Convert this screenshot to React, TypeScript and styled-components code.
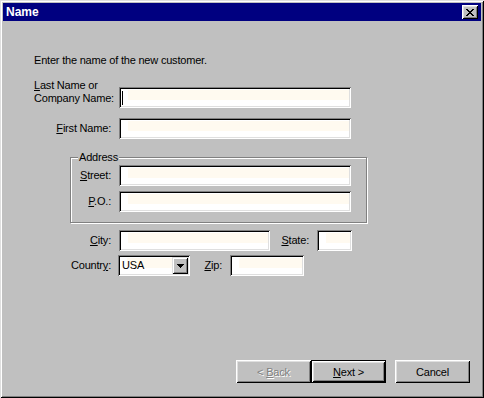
import styled, { createGlobalStyle } from "styled-components";

const GlobalStyle = createGlobalStyle`
  html, body {
    margin: 0;
    padding: 0;
    background: #c0c0c0;
  }
  body {
    font-family: "Liberation Sans", Arial, sans-serif;
    font-size: 11px;
    letter-spacing: -0.2px;
    color: #000;
  }
`;

const raised =
  "inset 1px 1px 0 #fff, inset -1px -1px 0 #000, inset 2px 2px 0 #dfdfdf, inset -2px -2px 0 #808080";
const sunken =
  "inset 1px 1px 0 #808080, inset -1px -1px 0 #fff, inset 2px 2px 0 #000, inset -2px -2px 0 #dfdfdf";
const cream =
  "#fff linear-gradient(#fffaf0, #fffaf0) no-repeat 9px 3px / calc(100% - 11px) 10px";

const Window = styled.div`
  width: 484px;
  height: 398px;
  box-sizing: border-box;
  padding: 3px;
  display: flex;
  flex-direction: column;
  background: #c0c0c0;
  box-shadow: inset 1px 1px 0 #dfdfdf, inset -1px -1px 0 #000,
    inset 2px 2px 0 #fff, inset -2px -2px 0 #808080;
`;

const TitleBar = styled.div`
  height: 18px;
  display: flex;
  align-items: center;
  padding: 0 3px 0 3px;
  background: #000080;
  color: #fff;
`;

const Title = styled.span`
  font-weight: bold;
  font-size: 12px;
  letter-spacing: 0;
  flex: 1;
`;

const CloseButton = styled.div`
  width: 16px;
  height: 14px;
  display: flex;
  align-items: center;
  justify-content: center;
  background: #c0c0c0;
  box-shadow: ${raised};
`;

const Content = styled.div`
  flex: 1;
  display: flex;
  flex-direction: column;
  align-items: flex-start;
  padding-left: 31px;
`;

const Intro = styled.p`
  margin: 32px 0 0;
  line-height: 14px;
`;

const Row = styled.div<{ $top: number; $bottom?: boolean }>`
  display: flex;
  align-items: ${(p) => (p.$bottom ? "flex-end" : "center")};
  margin-top: ${(p) => p.$top}px;
`;

const Label = styled.label<{ $w: number; $gap?: number; $left?: number; $start?: boolean }>`
  flex-shrink: 0;
  width: ${(p) => p.$w}px;
  margin-left: ${(p) => p.$left ?? 0}px;
  margin-right: ${(p) => p.$gap ?? 8}px;
  padding-bottom: ${(p) => (p.$start ? 3 : 0)}px;
  text-align: ${(p) => (p.$start ? "left" : "right")};
  line-height: 13px;
  white-space: nowrap;
`;

const Field = styled.div<{ $w: number }>`
  width: ${(p) => p.$w}px;
  height: 21px;
  box-sizing: border-box;
  display: flex;
  align-items: center;
  padding-left: 3px;
  background: ${cream};
  box-shadow: ${sunken};
`;

const Caret = styled.span`
  width: 1px;
  height: 14px;
  background: #000;
`;

const GroupBox = styled.fieldset`
  margin: 12px 0 0 36px;
  width: 297px;
  min-width: 0;
  box-sizing: border-box;
  padding: 1px 0 10px 4px;
  border: 1px solid #808080;
  box-shadow: inset 1px 1px 0 #fff, 1px 1px 0 #fff;
`;

const GroupLegend = styled.legend`
  margin-left: 3px;
  padding: 0 1px;
  line-height: 13px;
  background: #c0c0c0;
`;

const Combo = styled.div`
  width: 72px;
  height: 21px;
  box-sizing: border-box;
  display: flex;
  align-items: center;
  padding: 2px 2px 2px 4px;
  background: ${cream};
  box-shadow: ${sunken};
`;

const ComboText = styled.span`
  flex: 1;
  line-height: 13px;
`;

const ComboButton = styled.div`
  width: 16px;
  height: 17px;
  display: flex;
  align-items: center;
  justify-content: center;
  background: #c0c0c0;
  box-shadow: inset 1px 1px 0 #dfdfdf, inset -1px -1px 0 #000,
    inset 2px 2px 0 #fff, inset -2px -2px 0 #808080;
`;

const ButtonBar = styled.div`
  display: flex;
  justify-content: flex-end;
  padding: 0 11px 12px 0;
`;

const Button = styled.button<{ $default?: boolean; $gap?: number }>`
  width: 75px;
  height: 23px;
  box-sizing: border-box;
  margin: 0 0 0 ${(p) => p.$gap ?? 0}px;
  padding: 0;
  font-family: "Liberation Sans", Arial, sans-serif;
  font-size: 11px;
  letter-spacing: -0.2px;
  color: #000;
  background: #c0c0c0;
  border: ${(p) => (p.$default ? "1px solid #000" : "none")};
  box-shadow: ${raised};

  &:disabled {
    color: #808080;
    text-shadow: 1px 1px 0 #fff;
  }
`;

function CloseGlyph() {
  const cells = [
    [0, 0, 2], [6, 0, 2],
    [1, 1, 2], [5, 1, 2],
    [2, 2, 4],
    [3, 3, 2],
    [2, 4, 4],
    [1, 5, 2], [5, 5, 2],
    [0, 6, 2], [6, 6, 2],
  ];
  return (
    <svg width="8" height="7" viewBox="0 0 8 7" shapeRendering="crispEdges">
      {cells.map(([x, y, w], i) => (
        <rect key={i} x={x} y={y} width={w} height={1} fill="#000" />
      ))}
    </svg>
  );
}

function DownArrow() {
  return (
    <svg width="7" height="4" viewBox="0 0 7 4" shapeRendering="crispEdges">
      <rect x="0" y="0" width="7" height="1" fill="#000" />
      <rect x="1" y="1" width="5" height="1" fill="#000" />
      <rect x="2" y="2" width="3" height="1" fill="#000" />
      <rect x="3" y="3" width="1" height="1" fill="#000" />
    </svg>
  );
}

export default function App() {
  return (
    <>
      <GlobalStyle />
      <Window>
        <TitleBar>
          <Title>Name</Title>
          <CloseButton>
            <CloseGlyph />
          </CloseButton>
        </TitleBar>

        <Content>
          <Intro>Enter the name of the new customer.</Intro>

          <Row $top={12} $bottom>
            <Label $w={77} $start>
              <u>L</u>ast Name or
              <br />
              Company Name:
            </Label>
            <Field $w={232}>
              <Caret />
            </Field>
          </Row>

          <Row $top={10}>
            <Label $w={77}>
              <u>F</u>irst Name:
            </Label>
            <Field $w={232} />
          </Row>

          <GroupBox>
            <GroupLegend>Address</GroupLegend>
            <Row $top={0}>
              <Label $w={36}>
                <u>S</u>treet:
              </Label>
              <Field $w={232} />
            </Row>
            <Row $top={5}>
              <Label $w={36}>
                <u>P</u>.O.:
              </Label>
              <Field $w={232} />
            </Row>
          </GroupBox>

          <Row $top={7}>
            <Label $w={77}>
              <u>C</u>ity:
            </Label>
            <Field $w={151} />
            <Label $w={29} $left={10}>
              <u>S</u>tate:
            </Label>
            <Field $w={35} />
          </Row>

          <Row $top={4}>
            <Label $w={77} $gap={7}>
              Countr<u>y</u>:
            </Label>
            <Combo>
              <ComboText>USA</ComboText>
              <ComboButton>
                <DownArrow />
              </ComboButton>
            </Combo>
            <Label $w={18} $left={14}>
              <u>Z</u>ip:
            </Label>
            <Field $w={74} />
          </Row>
        </Content>

        <ButtonBar>
          <Button disabled>
            &lt; <u>B</u>ack
          </Button>
          <Button $default>
            <u>N</u>ext &gt;
          </Button>
          <Button $gap={9}>Cancel</Button>
        </ButtonBar>
      </Window>
    </>
  );
}
